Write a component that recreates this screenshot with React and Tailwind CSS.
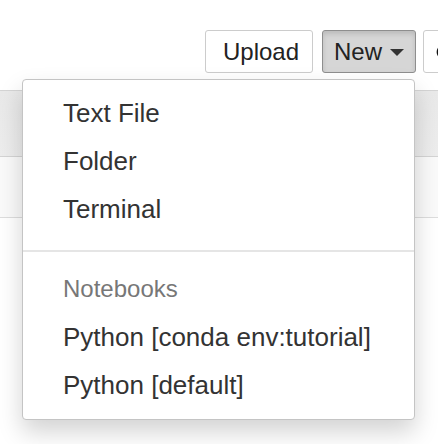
import React from 'react';

const MenuItem = ({ children }) => (
  <div className="h-[48px] leading-[48px] text-[26px] text-[#333] pl-[40px] whitespace-nowrap">{children}</div>
);

const App = () => {
  return (
    <div className="relative w-[438px] h-[444px] overflow-hidden bg-white font-['Liberation_Sans',Arial,sans-serif]">
      {/* toolbar */}
      <div className="flex pt-[30px] pl-[205px]">
        <button className="h-[43px] w-[108px] shrink-0 rounded-[3px] border border-[#cccccc] bg-white pl-[4px] text-[24px] text-[#222]">
          Upload
        </button>
        <button className="ml-[9px] flex h-[43px] w-[94px] shrink-0 items-center justify-center gap-[8px] rounded-[3px] border border-[#8e8e8e] bg-[#d6d6d6] text-[24px] text-[#222] shadow-[inset_0_3px_5px_rgba(0,0,0,0.125)]">
          <span>New</span>
          <span className="mt-[2px] h-0 w-0 border-x-[7px] border-t-[7px] border-x-transparent border-t-[#333]" />
        </button>
        <button className="ml-[7px] flex h-[43px] w-[40px] shrink-0 items-center pl-[11px] rounded-[3px] border border-[#cccccc] bg-white">
          <svg width="18" height="18" viewBox="0 0 24 24" fill="none" stroke="#111" strokeWidth="3.5">
            <path d="M20 12a8 8 0 1 1-2.3-5.7" />
            <path d="M21 3v6h-6" fill="#111" />
          </svg>
        </button>
      </div>

      {/* file list behind */}
      <div className="mt-[17px]">
        <div className="h-[67px] border-y border-[#d4d4d4] bg-gradient-to-b from-[#e9e9e9] to-[#ededed]" />
        <div className="h-[61px] border-b border-[#dddddd] bg-[#fafafa]" />
      </div>

      {/* dropdown menu */}
      <div className="absolute left-[22px] top-[79px] w-[393px] rounded-[4px] border border-[#c4c4c4] bg-white pt-[9px] pb-[10px] shadow-[0_12px_24px_rgba(0,0,0,0.175)]">
        <MenuItem>Text File</MenuItem>
        <MenuItem>Folder</MenuItem>
        <MenuItem>Terminal</MenuItem>
        <div className="mt-[17px] mb-[13px] h-[2px] bg-[#e5e5e5]" />
        <div className="h-[48px] leading-[48px] text-[24px] text-[#777] pl-[40px]">Notebooks</div>
        <MenuItem>Python [conda env:tutorial]</MenuItem>
        <MenuItem>Python [default]</MenuItem>
      </div>
    </div>
  );
};

export default App;
